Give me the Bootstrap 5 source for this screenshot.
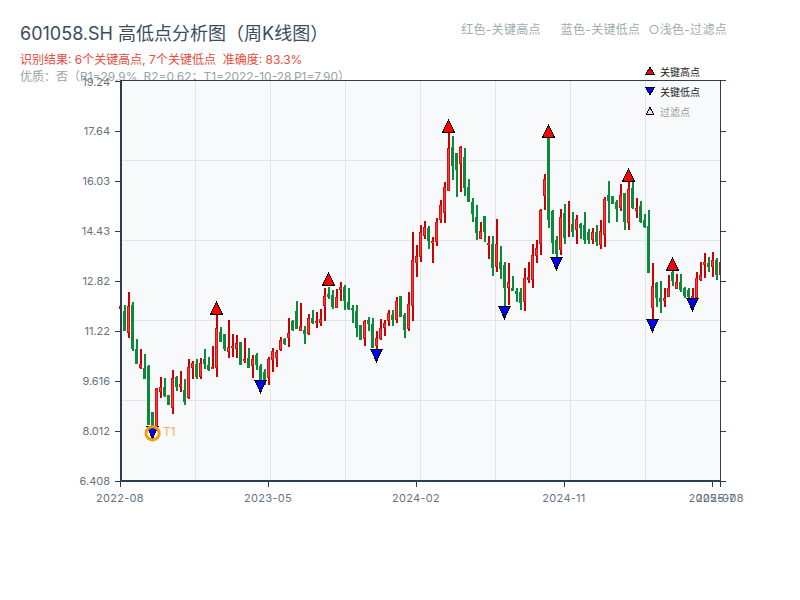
<!DOCTYPE html>
<html lang="zh">
<head>
<meta charset="utf-8">
<title>601058.SH</title>
<link href="https://cdn.jsdelivr.net/npm/bootstrap@5.3.0/dist/css/bootstrap.min.css" rel="stylesheet">
<style>
body{background:#fff;font-family:"Inter","Noto Sans CJK SC",sans-serif;overflow:hidden}
.hdr{height:80px;padding:21px 73px 0 20px}
.ttl{font-size:18px;line-height:26px;color:#3a4c5e;font-weight:400}
.res{font-size:12px;line-height:17px;color:#e74c3c;margin-top:4px}
.qual{font-size:12px;line-height:17px;color:#95a5a6;word-spacing:-1px}
.lgd{font-size:12px;line-height:17px;color:#a0acad;letter-spacing:.3px;column-gap:20px}
.lgd-ring{margin-left:-12px}
.chart{display:block;width:800px;height:540px;margin-top:-20px}
.chart text{font-family:"Inter","Noto Sans CJK SC",sans-serif}
.ylab{font-size:11px;fill:#66727f;text-anchor:end}
.xlab{font-size:11px;fill:#66727f;text-anchor:middle;letter-spacing:.28px}
.leg{font-size:10px;fill:#222}
.leg-m{fill:#999}
.t1{font-size:12px;fill:#f39c12;fill-opacity:.75}
</style>
</head>
<body>
<header class="hdr">
  <div class="d-flex justify-content-between align-items-start">
    <h1 class="ttl m-0">601058.SH 高低点分析图（周K线图）</h1>
    <div class="lgd d-flex"><span>红色-关键高点</span><span>蓝色-关键低点</span><span class="lgd-ring">○浅色-过滤点</span></div>
  </div>
  <p class="res mb-0">识别结果: 6个关键高点, 7个关键低点 &nbsp;准确度: 83.3%</p>
  <p class="qual mb-0">优质：否（R1=29.9%, R2=0.62；T1=2022-10-28 P1=7.90）</p>
</header>
<svg class="chart" viewBox="0 60 800 540" xmlns="http://www.w3.org/2000/svg">
  <rect x="121" y="81" width="600" height="400" fill="#f8f9fa"/>
  <g id="grid" stroke="#e1e4e8" stroke-width="1.2" shape-rendering="crispEdges">
    <path d="M195.5 81V480M270.5 81V480M345.5 81V480M420.5 81V480M495.5 81V480M570.5 81V480M645.5 81V480M121 160.5H720M121 240.5H720M121 320.5H720M121 400.5H720" fill="none"/>
  </g>
  <g id="bars" shape-rendering="crispEdges"></g>
  <g id="axes" fill="none" stroke="#2c3e50" shape-rendering="crispEdges">
    <path d="M120 80.5H726M720.5 81V481" stroke-width="1"/>
    <path d="M121 81V482" stroke-width="2"/>
    <path d="M120 481H721" stroke-width="2"/>
    <path d="M115 81H120M115 131H120M115 181H120M115 231H120M115 281H120M115 331H120M115 381H120M115 431H120M115 481H120M721 131H726M721 181H726M721 231H726M721 281H726M721 331H726M721 381H726M721 431H726M721 481H726M120.5 482V487M268.5 482V487M416.5 482V487M564.5 482V487M712.5 482V487M720.5 482V487" stroke-width="1"/>
  </g>
  <g>
    <text class="ylab" x="110" y="86">19.24</text>
    <text class="ylab" x="110" y="135">17.64</text>
    <text class="ylab" x="110" y="185">16.03</text>
    <text class="ylab" x="110" y="235">14.43</text>
    <text class="ylab" x="110" y="285">12.82</text>
    <text class="ylab" x="110" y="335">11.22</text>
    <text class="ylab" x="110" y="385">9.616</text>
    <text class="ylab" x="110" y="435">8.012</text>
    <text class="ylab" x="110" y="485">6.408</text>
    <text class="xlab" x="120" y="502">2022-08</text>
    <text class="xlab" x="268" y="502">2023-05</text>
    <text class="xlab" x="416" y="502">2024-02</text>
    <text class="xlab" x="564" y="502">2024-11</text>
    <text class="xlab" x="712" y="502">2025-07</text>
    <text class="xlab" x="720" y="502">2025-08</text>
  </g>
  <g id="marks" stroke="#000" stroke-width="1" shape-rendering="crispEdges"></g>
  <circle cx="152.6" cy="433.3" r="6.6" fill="none" stroke="#f39c12" stroke-width="3"/>
  <text class="t1" x="163" y="436">T1</text>
  <g stroke="#000" stroke-width="1" shape-rendering="crispEdges">
    <polygon points="650,67.5 654.5,74.5 645.5,74.5" fill="#f00"/>
    <polygon points="650,95 654.5,87.5 645.5,87.5" fill="#00f"/>
    <polygon points="650,107.5 653.5,114 646.5,114" fill="#ffd6d6"/>
  </g>
  <text class="leg" x="660" y="76">关键高点</text>
  <text class="leg" x="660" y="96">关键低点</text>
  <text class="leg leg-m" x="660" y="116">过滤点</text>
</svg>
<script>
const D="r306,309,306,309 g305,331,311,331 r292,338,306,333 g302,351,305,349 g339,364,349,364 r349,369,364,368 g354,379,368,379 g365,425,366,425 g412,427,412,427 r388,430,388,427 r377,398,387,392 g378,397,387,396 g395,405,395,405 r370,414,378,408 g376,391,377,387 r371,392,384,387 g379,405,390,402 r359,399,367,398 r361,379,363,368 g359,379,364,377 r358,379,363,377 g349,369,359,364 g357,371,365,370 r346,369,367,369 r315,377,328,368 g327,342,332,342 g334,351,334,349 r320,358,347,352 r334,357,346,348 r335,358,343,349 g342,365,342,365 r338,363,359,361 g348,368,358,368 r355,378,359,366 g353,370,355,365 g364,387,366,385 g369,385,372,384 r357,385,359,378 r348,372,351,360 r350,367,352,358 r337,351,340,350 g338,345,339,344 r318,347,333,338 g320,331,321,330 g301,329,311,329 r303,331,326,331 g326,344,330,334 r314,335,318,334 g310,324,318,323 r312,328,321,323 r309,326,319,323 r288,321,296,306 g287,299,294,297 g290,309,295,307 r289,308,297,308 r282,301,287,290 g285,310,287,301 g288,310,302,309 g305,323,308,310 g305,337,311,328 g325,340,325,340 r320,346,321,339 g317,331,320,324 g318,348,324,348 r331,350,338,346 r319,340,328,339 r320,336,323,328 r310,326,313,321 g310,326,315,320 r297,323,301,320 g296,317,296,317 g313,338,315,330 r292,331,304,329 r232,321,260,306 r245,277,256,263 r225,262,232,257 r221,239,227,236 g226,249,228,241 r237,263,241,243 r218,246,222,242 r200,223,205,220 r182,223,187,213 r133,191,148,191 g136,180,147,166 g153,197,153,170 r146,192,147,164 g148,196,157,188 g179,202,187,202 g198,222,202,214 g205,240,217,233 r222,239,231,239 g216,242,216,232 r236,259,243,245 g236,276,244,268 r219,272,244,267 g246,279,262,269 g262,307,265,288 r263,305,282,288 g276,291,288,291 g288,302,291,294 g288,310,292,303 r268,311,278,302 r262,283,277,280 r244,288,255,280 r240,263,248,256 r209,255,210,244 r174,210,179,196 g137,228,138,220 g210,254,211,243 g236,258,240,254 r209,255,217,250 g204,244,213,238 r201,237,225,226 g212,237,224,232 r215,244,219,230 g223,239,224,228 g212,244,225,240 g229,244,232,240 r228,244,232,240 g225,246,232,242 r220,249,231,245 r197,247,199,235 g181,223,195,201 g196,204,196,204 g200,222,202,209 r184,211,195,208 g193,230,193,222 r177,230,189,223 g182,209,188,208 r198,218,208,211 g201,223,206,222 g214,228,220,227 g210,273,226,273 r263,320,286,308 g282,307,283,298 g281,313,298,302 r288,307,298,301 r275,297,288,297 g270,286,272,281 r274,289,282,289 g274,292,282,290 g287,298,288,296 g288,298,290,297 r288,298,296,298 r272,298,278,298 r262,281,275,280 r253,278,262,265 g257,272,263,267 r252,277,260,267 g258,280,260,275 r262,280,262,275".split(" ");
const rect=(x,y,w,h,f)=>`<rect x="${x}" y="${y}" width="${w}" height="${h}" fill="${f}"/>`;
let s="";
D.forEach((d,i)=>{
  const red=d[0]==="r", [wt,wb,bt,bb]=d.slice(1).split(",").map(Number), x=119+4*i+1;
  const w=i===150?1:2;
  if(red){
    s+=rect(x,wt,w,wb-wt,"#cc0000");
    if(bb-bt>1){
      s+=rect(x-1,bt,i===150?2:3,bb-bt,"#d60f0f");
      s+=rect(x,bt+1,1,Math.max(bb-bt-2,1),"#ff3b3b");
    }
  }else{
    s+=rect(x,wt,w,wb-wt,"#0a8a3a");
    s+=rect(x-1,bt,i===150?2:3,bb-bt,"#0a8a3a");
  }
});
document.getElementById("bars").innerHTML=s;
const up=[[216.5,302],[328.5,273],[448.5,120],[548.5,125],[628.5,169],[672.5,258]];
const dn=[[152.5,426],[260.5,380],[376.5,349],[504.5,306],[556.5,257],[652.5,319],[692.5,298]];
document.getElementById("marks").innerHTML=
 up.map(([x,y])=>`<polygon points="${x},${y} ${x+6},${y+12.5} ${x-6},${y+12.5}" fill="#f00"/>`).join("")+
 dn.map(([x,y])=>`<polygon points="${x},${y+12.5} ${x+6},${y} ${x-6},${y}" fill="#00f"/>`).join("");
</script>
<script src="https://cdn.jsdelivr.net/npm/bootstrap@5.3.0/dist/js/bootstrap.bundle.min.js"></script>
</body>
</html>
